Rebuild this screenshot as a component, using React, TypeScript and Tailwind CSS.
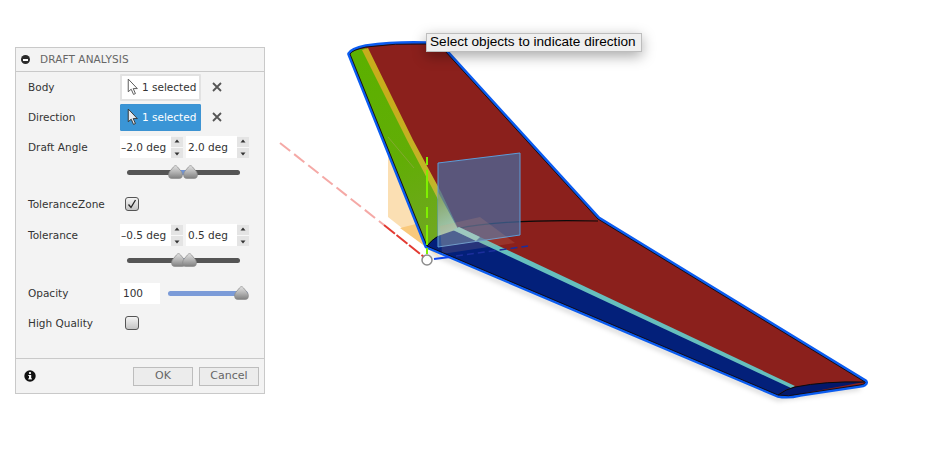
import React from "react";

function Cursor({ light }: { light?: boolean }) {
  return (
    <svg width="12" height="18" viewBox="0 0 11 17" className="shrink-0">
      <path d="M1 1 L1 13 L3.8 10.6 L6 15.5 L7.8 14.7 L5.7 10 L9.6 10 Z" fill={light ? "#e6ebf1" : "#ffffff"} stroke={light ? "#333" : "#555"} strokeWidth="0.9" strokeLinejoin="round" />
    </svg>
  );
}

function XBtn() {
  return (
    <svg width="10" height="10" viewBox="0 0 10 10" className="ml-[11px] shrink-0">
      <path d="M1 1 L9 9 M9 1 L1 9" stroke="#555" strokeWidth="1.8" />
    </svg>
  );
}

function Select({ active }: { active?: boolean }) {
  return (
    <div className={active
      ? "flex h-[27px] w-[81px] items-center gap-[3px] rounded-[1px] border border-[#3d93d2] bg-[#3a95d6] pl-[6px] text-white"
      : "flex h-[27px] w-[81px] items-center gap-[3px] rounded-[1px] border-2 border-[#e2e2e2] bg-white pl-[5px] text-[#333]"}>
      <Cursor light={active} />
      <span className="pt-px">1 selected</span>
    </div>
  );
}

function Spin({ value, inset }: { value: string; inset: string }) {
  return (
    <div className="flex h-[22px] items-center">
      <div className={`flex h-[22px] w-[51px] items-center whitespace-nowrap bg-white pt-px text-[#333] ${inset}`}>{value}</div>
      <div className="flex h-[21px] w-[12px] flex-col items-center justify-around bg-[#e4e4e4]">
        <svg width="6" height="4" viewBox="0 0 6 4"><path d="M3 0.5 L5.5 3.5 L0.5 3.5 Z" fill="#333" /></svg>
        <div className="h-px w-full bg-[#f8f8f8]" />
        <svg width="6" height="4" viewBox="0 0 6 4"><path d="M3 3.5 L5.5 0.5 L0.5 0.5 Z" fill="#333" /></svg>
      </div>
    </div>
  );
}

function Thumb() {
  return (
    <svg width="15" height="14" viewBox="0 0 15 14" className="block">
      <defs>
        <linearGradient id="thumbfill" x1="0" y1="0" x2="0" y2="1">
          <stop offset="0" stopColor="#e2e2e2" />
          <stop offset="0.5" stopColor="#b4b4b4" />
          <stop offset="1" stopColor="#808080" />
        </linearGradient>
      </defs>
      <path d="M7.5 0.6 Q8.4 0.6 9.6 2 L13.4 6.6 Q14.4 8 14.4 10 Q14.4 13.4 11.6 13.4 L3.4 13.4 Q0.6 13.4 0.6 10 Q0.6 8 1.6 6.6 L5.4 2 Q6.6 0.6 7.5 0.6 Z" fill="url(#thumbfill)" stroke="#8a8a8a" strokeWidth="0.7" />
    </svg>
  );
}

function RangeSlider({ left, right, fill }: { left: string; right: string; fill: string }) {
  return (
    <div className="flex h-[20px] items-center pl-[111px]">
      <div className="relative h-[5px] w-[113px] rounded-full bg-[#555]">
        <div className={`absolute top-0 h-[5px] bg-[#6f93d6] ${fill}`} />
        <div className={`absolute top-[-5px] ${left}`}><Thumb /></div>
        <div className={`absolute top-[-5px] ${right}`}><Thumb /></div>
      </div>
    </div>
  );
}

function Check({ checked }: { checked?: boolean }) {
  return (
    <div className="flex h-[14px] w-[14px] items-center justify-center rounded-[3px] border border-[#555] bg-gradient-to-b from-[#f4f4f4] to-[#c4c4c4]">
      {checked && (
        <svg width="10" height="10" viewBox="0 0 10 10"><path d="M1.5 5.5 L4 8.5 L8.5 1" fill="none" stroke="#222" strokeWidth="1.3" /></svg>
      )}
    </div>
  );
}

function Row({ label, children, className }: { label: string; children?: React.ReactNode; className?: string }) {
  return (
    <div className={`flex h-[30px] items-center pl-[12px] ${className ?? ""}`}>
      <span className="w-[92px] shrink-0 whitespace-nowrap pt-px text-[#333]">{label}</span>
      {children}
    </div>
  );
}

function Panel() {
  return (
    <div className="flex h-[347px] w-[250px] shrink-0 flex-col border border-[#c9c9c9] bg-[#f3f3f3] font-['DejaVu_Sans',sans-serif] text-[10.5px]">
      <div className="flex h-[24px] shrink-0 items-center gap-[10px] border-b border-[#c9c9c9] pl-[5px] text-[#666]">
        <div className="flex h-[9px] w-[9px] items-center justify-center rounded-full bg-[#2a2a2a]">
          <div className="h-[2px] w-[5px] bg-white" />
        </div>
        <span className="text-[10.5px] tracking-[0.1px]">DRAFT ANALYSIS</span>
      </div>
      <Row label="Body">
        <Select />
        <XBtn />
      </Row>
      <Row label="Direction">
        <Select active />
        <XBtn />
      </Row>
      <Row label="Draft Angle">
        <div className="flex gap-[3px]">
          <Spin value="–2.0 deg" inset="pl-px" />
          <Spin value="2.0 deg" inset="pl-[2px]" />
        </div>
      </Row>
      <RangeSlider left="left-[41px]" right="left-[56px]" fill="left-[50px] w-[12px]" />
      <Row label="ToleranceZone" className="mt-[7px]">
        <div className="pl-[5px]"><Check checked /></div>
      </Row>
      <Row label="Tolerance" className="mt-px">
        <div className="flex gap-[3px]">
          <Spin value="–0.5 deg" inset="pl-px" />
          <Spin value="0.5 deg" inset="pl-[2px]" />
        </div>
      </Row>
      <RangeSlider left="left-[44px]" right="left-[55px]" fill="left-[52px] w-[10px]" />
      <Row label="Opacity" className="mt-[8px]">
        <div className="flex h-[21px] w-[40px] items-center bg-white pl-[3px] pt-px text-[#333]">100</div>
        <div className="relative ml-[8px] h-[5px] w-[80px] rounded-full bg-[#7b9bd8]">
          <div className="absolute left-[66px] top-[-5px]"><Thumb /></div>
        </div>
      </Row>
      <Row label="High Quality">
        <div className="pl-[5px]"><Check /></div>
      </Row>
      <div className="flex-1" />
      <div className="flex h-[35px] shrink-0 items-center border-t border-[#c9c9c9] pl-[8px] pr-[5px]">
        <svg width="12" height="12" viewBox="0 0 12 12">
          <circle cx="6" cy="6" r="5.7" fill="#111" />
          <rect x="5" y="5" width="2.2" height="4" fill="#fff" />
          <rect x="4.2" y="8.4" width="3.8" height="1" fill="#fff" />
          <rect x="4.2" y="5" width="2" height="0.9" fill="#fff" />
          <circle cx="6" cy="3.1" r="1.15" fill="#fff" />
        </svg>
        <div className="flex-1" />
        <div className="flex gap-[6px] text-[11px] text-[#666]">
          <div className="flex h-[19px] w-[60px] items-center justify-center border border-[#bdbdbd] bg-[#ececec]">OK</div>
          <div className="flex h-[19px] w-[60px] items-center justify-center border border-[#bdbdbd] bg-[#ececec]">Cancel</div>
        </div>
      </div>
    </div>
  );
}

function Wing() {
  const outline = "M350 54 Q352 50 366 47 Q395 43 426 44 L445 51 L598 219 L865 382 Q866 384 860 385 L800 394 Q788 397 778 395 L427 246 Z";
  return (
    <svg viewBox="265 0 662 469" width="662" height="469" className="block flex-1">
      <defs>
        <linearGradient id="stripg" gradientUnits="userSpaceOnUse" x1="390" y1="100" x2="470" y2="240">
          <stop offset="0" stopColor="#c7ad1c" />
          <stop offset="0.6" stopColor="#c2b52a" />
          <stop offset="1" stopColor="#7ec9b8" />
        </linearGradient>
        <linearGradient id="greeng" gradientUnits="userSpaceOnUse" x1="360" y1="60" x2="430" y2="230">
          <stop offset="0" stopColor="#5cb000" />
          <stop offset="0.6" stopColor="#62ad06" />
          <stop offset="1" stopColor="#6fa81e" />
        </linearGradient>
        <linearGradient id="paleg" gradientUnits="userSpaceOnUse" x1="438" y1="200" x2="458" y2="235">
          <stop offset="0" stopColor="#88a86a" />
          <stop offset="1" stopColor="#a6cfc4" />
        </linearGradient>
        <filter id="soft" x="-10%" y="-10%" width="120%" height="120%">
          <feGaussianBlur stdDeviation="2.5" />
        </filter>
      </defs>

      {/* soft shadow under lower edge */}
      <path d="M430 252 L778 399 L860 388" fill="none" stroke="#000" strokeOpacity="0.22" strokeWidth="3" filter="url(#soft)" />

      {/* orange draft plane behind the wing */}
      <path d="M388 137 L388 217 L440 258 L427 240 Z" fill="#fbdfb3" />
      <path d="M400 228 L424 222 L430 250 L437 255 Z" fill="#f9c97c" />

      {/* blue halo, its inner half is covered by the surfaces */}
      <path d={outline} fill="none" stroke="#0b5cf0" strokeWidth="5.6" strokeLinejoin="round" />

      {/* red surface */}
      <path d={outline} fill="#8b201c" />
      {/* green surface */}
      <path d="M350 54 Q352 50 366 48 L458 232 L427 246 Z" fill="url(#greeng)" />
      <path d="M388 137 L414 168" stroke="#8aa83a" strokeWidth="0.8" fill="none" />
      {/* navy side */}
      <path d="M427 246 Q435 234 456 229 L793 387 Q783 390 778 395 Z" fill="#03207a" />
      {/* navy tip */}
      <path d="M778 395 Q785 389 795 387 Q825 381 864 382 L800 394 Q788 397 778 395 Z" fill="#03186b" />
      {/* yellow to cyan ribbon */}
      <path d="M362 50 L368 48 L413 140 L441 192 L458 228 L454 230 L407 140 Z" fill="url(#stripg)" />
      <path d="M453 230 L459 227 L795 386 L791 388 Z" fill="#66bfbd" />

      {/* black section curves */}
      <path d="M456 229 Q500 219 598 221" fill="none" stroke="#0a0a0a" strokeWidth="1.2" />
      <path d="M427 246 Q436 234 456 229" fill="none" stroke="#0a0a0a" strokeWidth="1" />
      <path d="M778 395 Q786 389 795 387 Q825 381 864 382" fill="none" stroke="#0a0a0a" strokeWidth="1" />

      {/* blue glass plane */}
      <path d="M438 163 L520 153 L520 235 L438 247 Z" fill="#476ba1" fillOpacity="0.72" stroke="#5c9cd8" strokeWidth="1" />
      <path d="M438 192 L458 229 L438 236 Z" fill="url(#paleg)" />
      <path d="M453 230 L459 227 L480 237 L476 241 Z" fill="#8fd0cc" />
      <path d="M440 226 L480 217 L515 243 L442 254 Z" fill="#e6a27a" fillOpacity="0.16" />

      {/* inner black edge */}
      <path d={outline} fill="none" stroke="#0a0a14" strokeWidth="0.9" strokeLinejoin="round" />

      {/* axes */}
      <path d="M280 143 L384 225" stroke="#f5a9a6" strokeWidth="2" strokeDasharray="13 5" fill="none" />
      <path d="M384 225 L424 257" stroke="#e33a32" strokeWidth="2" strokeDasharray="14 2" fill="none" />
      <path d="M427 157 L427 254" stroke="#80f000" strokeWidth="2" strokeDasharray="8 5 28 9 11 7 20 3" fill="none" />
      <path d="M434 259 L450 257" stroke="#1046f0" strokeWidth="2" fill="none" />
      <path d="M456 256 L528 246" stroke="#1b2e9c" strokeWidth="1.6" strokeDasharray="7 4" fill="none" />
      <circle cx="427" cy="260" r="5" fill="#fff" fillOpacity="0.4" stroke="#8c8c8c" strokeWidth="1.5" />
    </svg>
  );
}

export default function App() {
  return (
    <div className="relative flex h-[469px] w-[927px] overflow-hidden bg-white pl-[15px] pt-[47px]">
      <Panel />
      <div className="-mt-[47px]">
        <Wing />
      </div>
      <div className="absolute left-[426px] top-[33px] flex h-[19px] w-[216px] items-center whitespace-nowrap border border-[#bdbdbd] bg-[#efefef] pl-[3px] font-['Liberation_Sans',sans-serif] text-[13.6px] text-black shadow-[0_4px_14px_rgba(0,0,0,0.35)]">
        Select objects to indicate direction
      </div>
    </div>
  );
}
